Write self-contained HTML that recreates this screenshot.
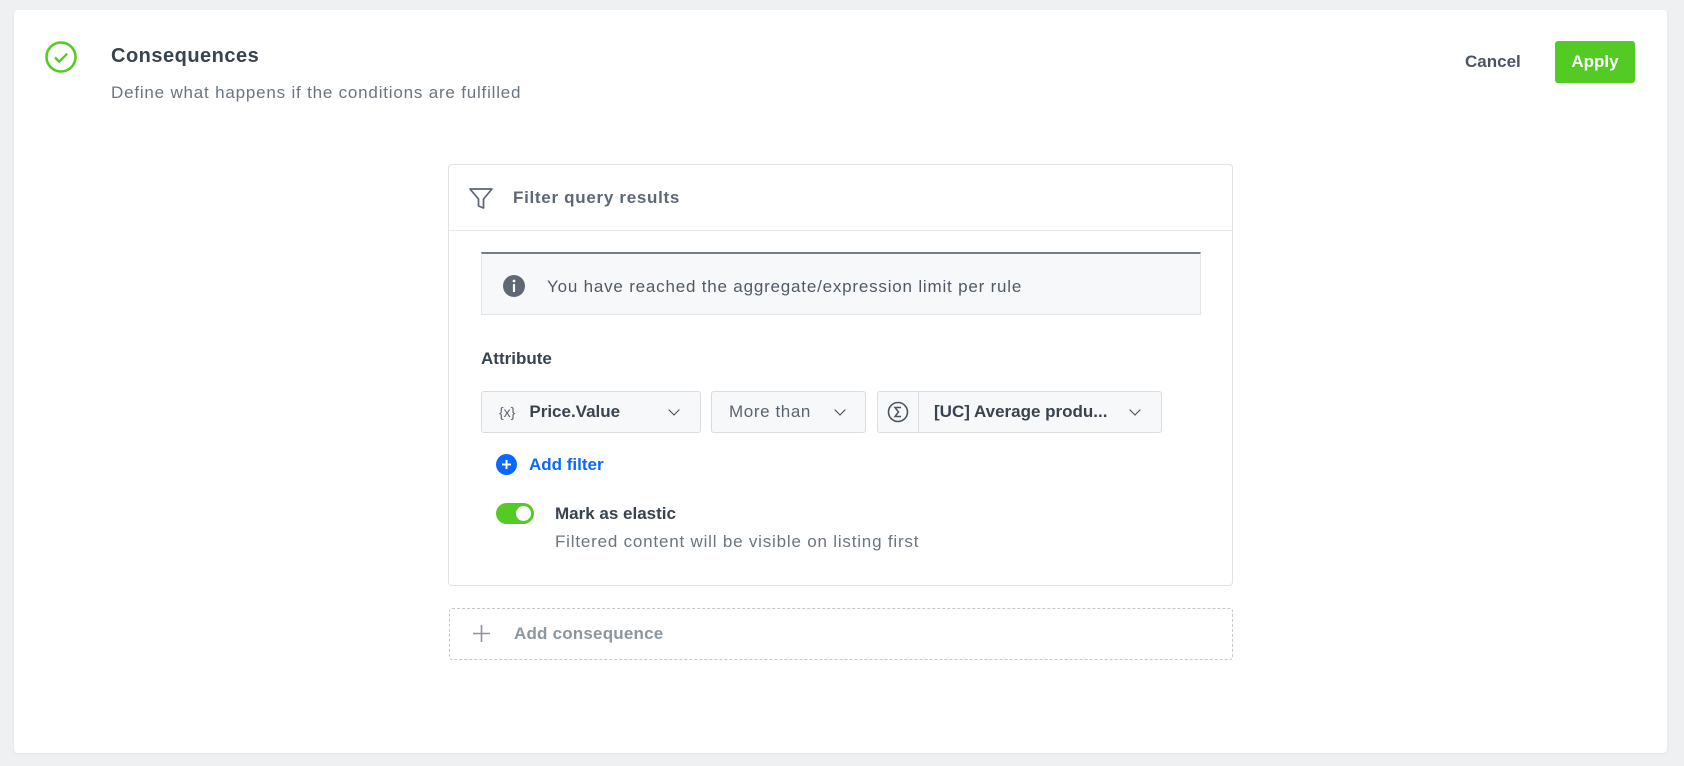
<!DOCTYPE html>
<html><head><style>
*{box-sizing:border-box;margin:0;padding:0}
body{width:1684px;height:766px;background:#eef0f2;font-family:"Liberation Sans",sans-serif;position:relative;overflow:hidden}
.card{position:absolute;left:14px;top:10px;width:1653px;height:743px;background:#fff;border-radius:4px;box-shadow:0 1px 3px rgba(0,0,0,.06)}
.a{position:absolute;white-space:nowrap}
.n{font-size:17px;letter-spacing:0.8px}
.sel{position:absolute;top:391px;height:42px;background:#f7f8f9;border:1px solid #d9dce0;border-radius:3px;font-size:17px;color:#384350;display:flex;align-items:center}
.chev{position:absolute;width:8px;height:8px;border-right:1.8px solid #384350;border-bottom:1.8px solid #384350;transform:rotate(45deg);top:14px}
</style></head><body>
<div class="card"></div>
<svg class="a" style="left:44px;top:40px" width="34" height="34" viewBox="0 0 34 34"><circle cx="17" cy="17" r="14.5" fill="none" stroke="#54cb25" stroke-width="2.6"/><path d="M11 17.5l4.2 4.2 8-8" fill="none" stroke="#54cb25" stroke-width="2.4"/></svg>
<div class="a" style="left:111px;top:45px;font-size:20px;font-weight:bold;color:#384350;letter-spacing:0.5px">Consequences</div>
<div class="a n" style="left:111px;top:83px;color:#6a7580">Define what happens if the conditions are fulfilled</div>
<div class="a" style="left:1465px;top:52px;font-size:17px;font-weight:bold;color:#4a5561">Cancel</div>
<div class="a" style="left:1555px;top:41px;width:80px;height:42px;background:#54cb25;border-radius:3px;color:#fff;font-size:17px;font-weight:bold;text-align:center;line-height:42px">Apply</div>

<div class="a" style="left:448px;top:164px;width:785px;height:422px;border:1px solid #dfe2e5;border-radius:4px"></div>
<div class="a" style="left:449px;top:230px;width:783px;height:1px;background:#e5e7ea"></div>
<svg class="a" style="left:468px;top:186px" width="26" height="26" viewBox="0 0 26 26"><path d="M2 3h22l-8.5 10v9l-5 -2v-7z" fill="none" stroke="#5a6470" stroke-width="1.7" stroke-linejoin="round"/></svg>
<div class="a" style="left:513px;top:188px;font-size:17px;font-weight:bold;color:#5d6874;letter-spacing:0.7px">Filter query results</div>

<div class="a" style="left:481px;top:252px;width:720px;height:63px;background:#f7f8f9;border:1px solid #e2e5e8;border-top:2px solid #737c87"></div>
<svg class="a" style="left:503px;top:275px" width="22" height="22" viewBox="0 0 22 22"><circle cx="11" cy="11" r="11" fill="#5f6873"/><rect x="9.9" y="9" width="2.2" height="8" fill="#fff"/><circle cx="11" cy="6" r="1.4" fill="#fff"/></svg>
<div class="a n" style="left:547px;top:277px;color:#4f5a66">You have reached the aggregate/expression limit per rule</div>

<div class="a" style="left:481px;top:349px;font-size:17px;font-weight:bold;color:#384350">Attribute</div>
<div class="sel" style="left:481px;width:220px"><span style="margin-left:17px;font-size:14px;color:#5a6470">{x}</span><span style="margin-left:14px;font-weight:bold">Price.Value</span><div class="chev" style="left:188px"></div></div>
<div class="sel" style="left:711px;width:155px"><span style="margin-left:17px;color:#5a6470;letter-spacing:0.6px">More than</span><div class="chev" style="left:124px"></div></div>
<div class="sel" style="left:877px;width:285px"><div style="width:41px;height:40px;border-right:1px solid #d9dce0;display:flex;align-items:center;justify-content:center"><svg width="22" height="22" viewBox="0 0 22 22"><circle cx="11" cy="11" r="9.5" fill="none" stroke="#4a5561" stroke-width="1.6"/><path d="M14 6.5H8l3.5 4.5L8 15.5h6" fill="none" stroke="#4a5561" stroke-width="1.5"/></svg></div><span style="margin-left:15px;font-weight:bold">[UC] Average produ...</span><div class="chev" style="left:253px"></div></div>

<svg class="a" style="left:496px;top:454px" width="21" height="21" viewBox="0 0 21 21"><circle cx="10.5" cy="10.5" r="10.5" fill="#0b68ff"/><path d="M10.5 6v9M6 10.5h9" stroke="#fff" stroke-width="2"/></svg>
<div class="a" style="left:529px;top:455px;font-size:17px;font-weight:bold;color:#0b68ff">Add filter</div>

<div class="a" style="left:496px;top:503px;width:38px;height:21px;border-radius:11px;background:#54cb25"></div>
<div class="a" style="left:516px;top:506px;width:15px;height:15px;border-radius:50%;background:#fff"></div>
<div class="a" style="left:555px;top:504px;font-size:17px;font-weight:bold;color:#384350">Mark as elastic</div>
<div class="a n" style="left:555px;top:532px;color:#6a7580">Filtered content will be visible on listing first</div>

<div class="a" style="left:449px;top:608px;width:784px;height:52px;border:1px dashed #c3c8ce;border-radius:3px"></div>
<svg class="a" style="left:472px;top:624px" width="19" height="19" viewBox="0 0 19 19"><path d="M9.5 1v17M1 9.5h17" stroke="#8a939c" stroke-width="1.6"/></svg>
<div class="a" style="left:514px;top:624px;font-size:17px;font-weight:bold;color:#8d969f;letter-spacing:0.2px">Add consequence</div>
</body></html>
